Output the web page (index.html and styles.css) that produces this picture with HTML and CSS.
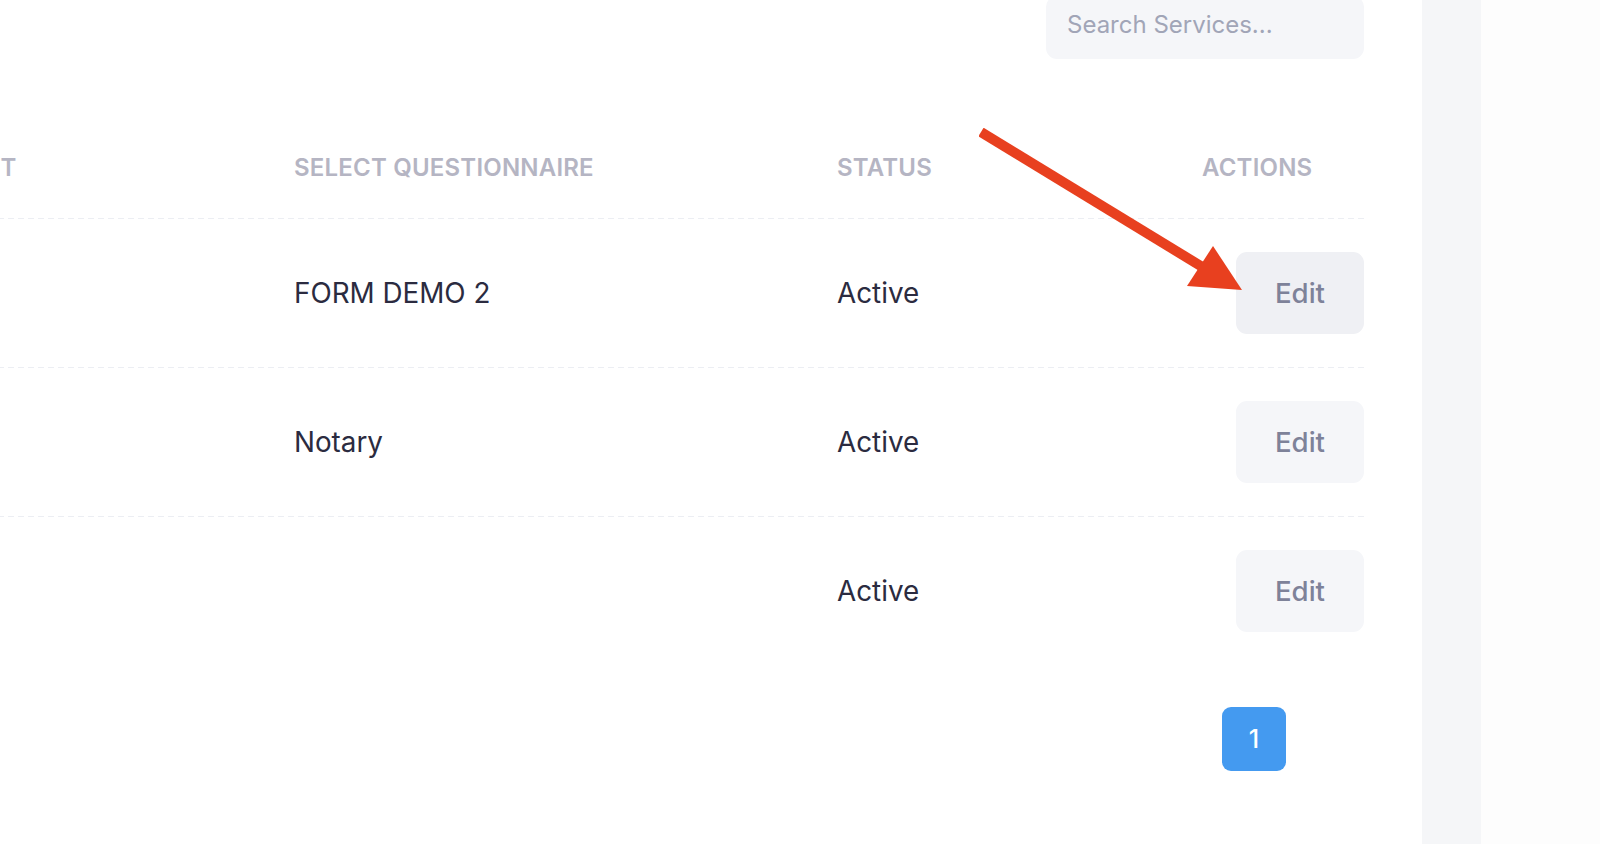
FILE: index.html
```html
<!DOCTYPE html>
<html lang="en">
<head>
<meta charset="utf-8">
<title>Services</title>
<link rel="stylesheet" href="styles.css">
</head>
<body>
<div class="layout">
  <main class="card">
    <div class="toolbar">
      <div class="search">Search Services...</div>
    </div>
    <div class="table-wrap">
      <div class="table">
        <div class="tr thead">
          <div class="th c1">PRODUCT</div>
          <div class="th c2">SELECT QUESTIONNAIRE</div>
          <div class="th c3">STATUS</div>
          <div class="th c4">ACTIONS</div>
        </div>
        <div class="tr">
          <div class="td c1"></div>
          <div class="td c2">FORM DEMO 2</div>
          <div class="td c3">Active</div>
          <div class="td c4"><button class="btn btn-hover">Edit</button></div>
        </div>
        <div class="tr">
          <div class="td c1"></div>
          <div class="td c2">Notary</div>
          <div class="td c3">Active</div>
          <div class="td c4"><button class="btn">Edit</button></div>
        </div>
        <div class="tr last">
          <div class="td c1"></div>
          <div class="td c2"></div>
          <div class="td c3">Active</div>
          <div class="td c4"><button class="btn">Edit</button></div>
        </div>
      </div>
    </div>
    <div class="pagination">
      <span class="page-item active">1</span>
    </div>
  </main>
  <aside class="rail"></aside>
  <div class="rest"></div>
</div>

<svg class="arrow" width="300" height="200" viewBox="0 0 300 200" xmlns="http://www.w3.org/2000/svg">
  <!-- callout arrow pointing at the first Edit button -->
  <line x1="2" y1="4" x2="225" y2="140" stroke="#e8401f" stroke-width="10"/>
  <polygon points="234,118 208,158 263,162" fill="#e8401f"/>
</svg>
</body>
</html>
```

FILE: styles.css
```css
* { box-sizing: border-box; }

html, body {
  margin: 0;
  padding: 0;
  background: #ffffff;
  font-family: Inter, "Noto Sans", sans-serif;
  overflow: hidden;
}

.layout {
  display: flex;
  width: 1600px;
  height: 844px;
}

.card {
  width: 1422px;
  height: 844px;
  background: #ffffff;
  padding: 0 58px 0 0;
  display: flex;
  flex-direction: column;
  border-bottom-right-radius: 12px;
}

.rail {
  width: 59px;
  background: #f5f6f8;
}

.rest {
  flex: 1;
  background: #fdfdfd;
}

/* toolbar with search */
.toolbar {
  display: flex;
  justify-content: flex-end;
  height: 58px;
}

.search {
  width: 318px;
  height: 63px;
  margin-top: -4px;
  background: #f5f6f9;
  border-radius: 11px;
  color: #a1a5b7;
  font-size: 24px;
  padding: 14px 0 0 21px;
  line-height: 30px;
  white-space: nowrap;
}

.table-wrap {
  overflow: hidden;
  margin-top: 92px;
}

.table {
  display: flex;
  flex-direction: column;
  margin-left: -103px;
}

.tr {
  display: grid;
  grid-template-columns: 397px 543px 365px 162px;
  align-items: center;
  background-image: repeating-linear-gradient(90deg, #eceef3 0 6px, transparent 6px 10px);
  background-size: 100% 1px;
  background-position: 1px 100%;
  background-repeat: no-repeat;
  padding-bottom: 1px;
}

.tr.last { background-image: none; }

.thead .th {
  color: #b5b5c3;
  font-size: 24px;
  font-weight: 600;
  line-height: 34px;
  letter-spacing: 0.2px;
  padding-top: 1px;
  padding-bottom: 33px;
  white-space: nowrap;
}

.td {
  color: #2b2b40;
  font-size: 27.8px;
  line-height: 34px;
  height: 148px;
  display: flex;
  align-items: center;
}

.c4.td { justify-content: flex-end; }

.btn {
  width: 128px;
  height: 82px;
  border: 0;
  border-radius: 11px;
  background: #f5f6f9;
  color: #7e8299;
  font-family: Inter, "Noto Sans", sans-serif;
  font-size: 27.6px;
  font-weight: 500;
  padding: 0;
}

.btn-hover { background: #eff0f4; }

/* pagination */
.pagination {
  display: flex;
  justify-content: flex-end;
  margin-top: 41px;
  padding-right: 78px;
}

.page-item {
  width: 64px;
  height: 64px;
  border-radius: 9px;
  display: flex;
  align-items: center;
  justify-content: center;
  font-size: 25px;
  font-weight: 500;
}

.page-item.active {
  background: #449af0;
  color: #ffffff;
}

/* annotation overlay */
.arrow {
  position: absolute;
  left: 979px;
  top: 128px;
}
```
